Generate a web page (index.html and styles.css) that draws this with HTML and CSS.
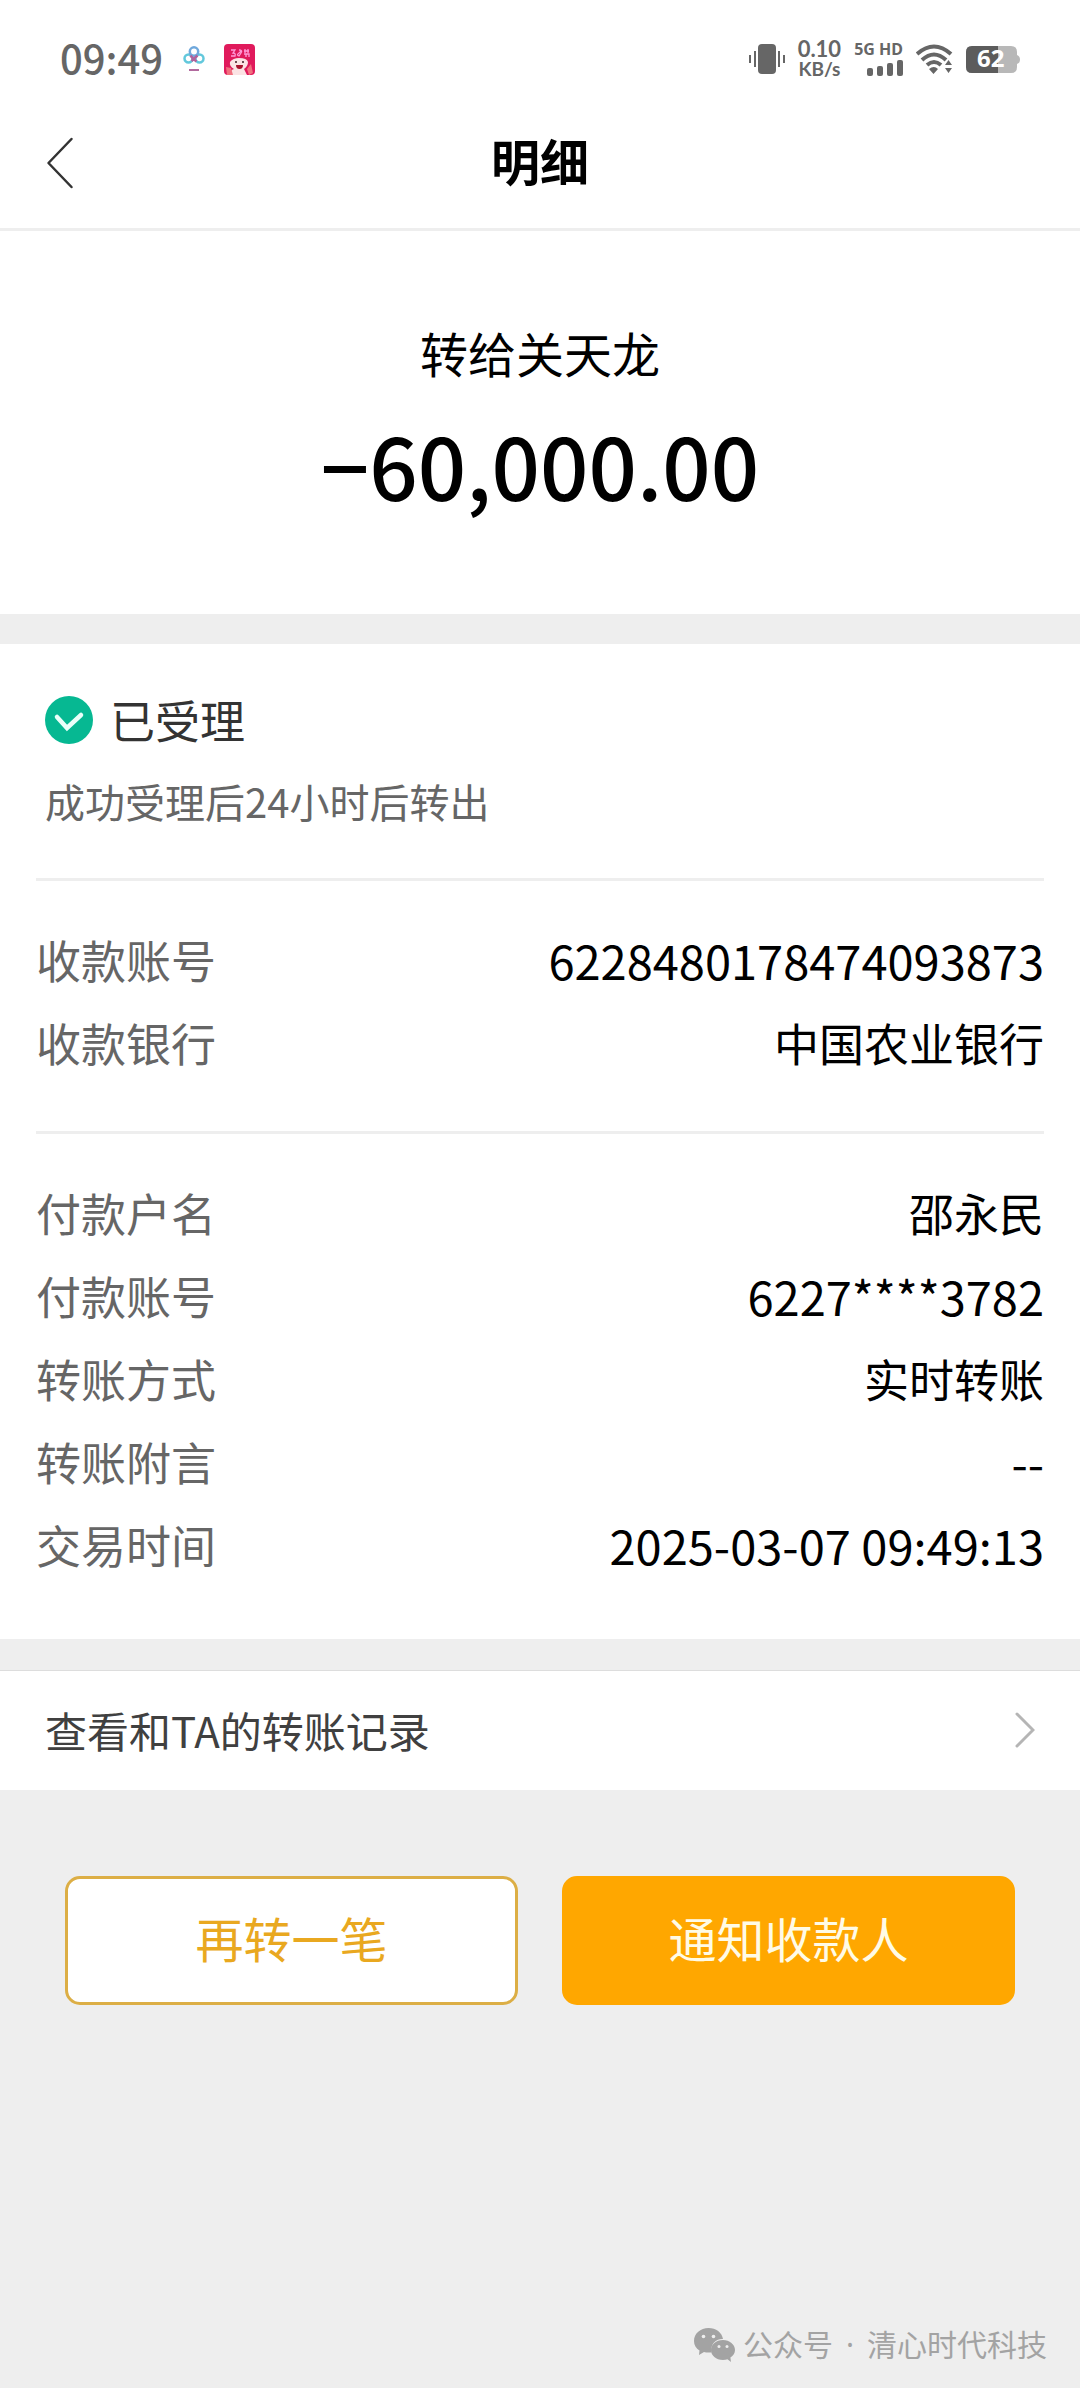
FILE: index.html
```html
<!DOCTYPE html>
<html lang="zh-CN">
<head>
<meta charset="utf-8">
<meta name="viewport" content="width=device-width, initial-scale=1">
<title>明细</title>
<link rel="stylesheet" href="styles.css">
</head>
<body>
<div class="page">
  <div class="status-bar">
    <div class="status-left">
      <span class="clock">09:49</span>
      <svg class="app-cloud" width="22" height="26" viewBox="0 0 22 26" fill="none" stroke-width="2.500">
        <circle cx="5.500" cy="12.500" r="4" stroke="#62c8dc"/>
        <circle cx="16.500" cy="12.500" r="4" stroke="#62c8dc"/>
        <circle cx="11" cy="5.500" r="4.200" stroke="#6fa8dc"/>
        <path d="M7.500 9.500Q9 12 13.500 15.500M14.500 9.500L8.500 15" stroke="#b0629c"/>
        <path d="M6 24h10" stroke="#b26a9e" stroke-width="2"/>
      </svg>
      <svg class="app-sale" width="31" height="31" viewBox="0 0 31 31">
        <rect width="31" height="31" rx="4" fill="#e01a5c"/>
        <path d="M7 6h4l-2 3q3 0 2 3h-4M15 6q4 0 2 3t-2 3q-3-1 0-3t0-3M20 7h5M21 5v4M24 5v4M20 10h5v3M22 10v3" fill="none" stroke="#ff9bd8" stroke-width="1.300"/>
        <path d="M6 31q0-5 4-6-5-3-4-7 3-4 9-4 8 0 9 4 0 4-4 7l3 6z" fill="#fbe3e4"/>
        <path d="M3 31l-1-8 5 1 2 7zM25 31l-2-6 4-5 2 9z" fill="#f0707e"/>
        <path d="M12 21h7q0 4-3.500 4t-3.500-4z" fill="#a8122c"/>
        <circle cx="12" cy="18" r="1" fill="#3b1b22"/>
        <circle cx="19" cy="18" r="1" fill="#3b1b22"/>
      </svg>
    </div>
    <div class="status-right">
      <svg width="36" height="30" viewBox="0 0 36 30" fill="#666">
        <rect x="9" width="18" height="30" rx="4"/>
        <path d="M5 7h2v16H5zM29 7h2v16h-2zM0 11h2v8H0zM34 11h2v8h-2z"/>
      </svg>
      <div class="speed"><span class="speed-value">0.10</span><span class="speed-unit">KB/s</span></div>
      <div class="network">
        <span class="network-type">5G HD</span>
        <svg width="36" height="16" viewBox="0 0 36 16" fill="#666">
          <rect y="8" width="6" height="8" rx="2"/><rect x="10" y="6" width="6" height="10" rx="2"/><rect x="20" y="3" width="6" height="13" rx="2"/><rect x="30" width="6" height="16" rx="2"/>
        </svg>
      </div>
      <svg width="37" height="30" viewBox="0 0 37 30">
        <path d="M1 10q17-15 34 0M6 16q12-11 24 0M11 21q7-6 14 0" fill="none" stroke="#666" stroke-width="4"/>
        <path d="M13 25q5-4 9 0l-4.500 5zM29 21l3.500-5 3.500 5zM29 24h7l-3.500 5z" fill="#666"/>
      </svg>
      <div class="battery">
        <svg width="54" height="27" viewBox="0 0 54 27">
          <path d="M6 0h39q6 0 6 6v3q3 1 3 4.500T51 18v3q0 6-6 6H6q-6 0-6-6V6q0-6 6-6z" fill="#b8b8b8"/>
          <path d="M6 0h26v27H6q-6 0-6-6V6q0-6 6-6z" fill="#5c5c5c"/>
        </svg>
        <span class="battery-level">62</span>
      </div>
    </div>
  </div>

  <header class="nav">
    <button class="back" type="button" aria-label="返回">
      <svg width="28" height="52" viewBox="0 0 28 52" fill="none" stroke="#333" stroke-width="2.500" stroke-linecap="round" stroke-linejoin="round"><path d="M25.500 2L2.500 26l23 24"/></svg>
    </button>
    <h1 class="title">明细</h1>
  </header>

  <main class="content">
    <section class="summary">
      <p class="payee">转给关天龙</p>
      <p class="amount">−60,000.00</p>
    </section>

    <section class="details">
      <div class="state">
        <div class="state-head">
          <svg width="48" height="48" viewBox="0 0 48 48"><circle cx="24" cy="24" r="24" fill="#06b892"/><path d="M12 21l10 11 14-13" fill="none" stroke="#e9fff9" stroke-width="4.500" stroke-linecap="round"/></svg>
          <h2 class="state-title">已受理</h2>
        </div>
        <p class="state-note">成功受理后24小时后转出</p>
      </div>
      <dl class="rows">
        <div class="row"><dt>收款账号</dt><dd class="num">6228480178474093873</dd></div>
        <div class="row"><dt>收款银行</dt><dd>中国农业银行</dd></div>
      </dl>
      <dl class="rows">
        <div class="row"><dt>付款户名</dt><dd>邵永民</dd></div>
        <div class="row"><dt>付款账号</dt><dd class="num">6227****3782</dd></div>
        <div class="row"><dt>转账方式</dt><dd>实时转账</dd></div>
        <div class="row"><dt>转账附言</dt><dd class="num">--</dd></div>
        <div class="row"><dt>交易时间</dt><dd class="num">2025-03-07 09:49:13</dd></div>
      </dl>
    </section>

    <a class="history" href="#history">
      <span>查看和TA的转账记录</span>
      <svg width="20" height="36" viewBox="0 0 20 36" fill="none" stroke="#b5b5b5" stroke-width="3" stroke-linecap="round"><path d="M2 2l16 16L2 34"/></svg>
    </a>

    <div class="actions">
      <button class="btn btn-outline" type="button">再转一笔</button>
      <button class="btn btn-solid" type="button">通知收款人</button>
    </div>
  </main>

  <footer class="credit">
    <svg width="41" height="34" viewBox="0 0 41 34">
      <path d="M14.500 0C6.500 0 0 5.500 0 13c0 4 2 7.500 5.500 9.500L5 27l5-3q2 .6 4.500.6h3A11 11 0 0 1 29 11C28 4.500 22 0 14.500 0z" fill="#a3a3a3"/>
      <path d="M29 12c-7 0-12 4.500-12 10s5 10 12 10q2.500 0 4.500-.7L37 34l-.6-4.500C39.300 27.700 41 25 41 22c0-5.500-5.500-10-12-10z" fill="#a3a3a3"/>
      <g fill="#eee"><circle cx="9.500" cy="8.500" r="1.800"/><circle cx="19.500" cy="8.500" r="1.800"/><circle cx="25" cy="18.500" r="1.500"/><circle cx="33" cy="18.500" r="1.500"/></g>
    </svg>
    <div class="credit-text"><span>公众号</span><span>·</span><span>清心时代科技</span></div>
  </footer>
</div>
</body>
</html>
```
FILE: styles.css
```css
* { box-sizing: border-box; }

body {
  margin: 0;
  background: #eee;
  color: #000;
  font-family: "Noto Sans CJK SC", sans-serif;
}

h1, h2, p, dl, dd { margin: 0; font-weight: 400; }
svg { display: block; flex: none; }
button { padding: 0; border: 0; background: none; color: inherit; font: inherit; cursor: pointer; }

.page { display: flex; flex-direction: column; min-height: 100vh; }

/* Phone status bar */
.status-bar {
  display: flex;
  justify-content: space-between;
  align-items: center;
  padding: 21px 60px 0;
  background: #fff;
  color: #666;
  font-weight: 500;
}
.status-left { display: flex; align-items: center; height: 76px; }
.clock { font-size: 40px; line-height: 72px; padding-bottom: 4px; }
.app-cloud { margin-left: 20px; }
.app-sale { margin-left: 19px; }
.status-right { display: flex; align-items: center; gap: 13px; }
.speed { display: flex; flex-direction: column; align-items: center; line-height: 20px; }
.speed-value { font-size: 22px; }
.speed-unit { font-size: 19px; }
.speed { font-family: Lato, sans-serif; font-weight: 700; }
.network-type, .battery-level { font-family: "Noto Sans", sans-serif; }
.network { display: flex; flex-direction: column; align-items: flex-end; gap: 3px; }
.network-type { font-size: 16px; font-weight: 700; line-height: 15px; }
.battery { display: grid; align-items: center; }
.battery > * { grid-area: 1 / 1; }
.battery-level { padding: 0 0 2px 11px; color: #fff; font-size: 24px; font-weight: 700; line-height: 24px; }

/* Title bar */
.nav {
  display: grid;
  grid-template-columns: 1fr auto 1fr;
  align-items: center;
  padding: 0 46px;
  border-bottom: 3px solid #eee;
  background: #fff;
}
.back { justify-self: start; }
.title { font-size: 49px; font-weight: 700; line-height: 125px; padding-bottom: 6px; }

.summary { padding: 89px 36px 94px; background: #fff; text-align: center; }
.payee { font-size: 48px; line-height: 64px; }
.amount { margin-top: 24px; font-size: 85px; font-weight: 500; line-height: 112px; }

.details { margin-top: 30px; padding: 44px 36px 16px; background: #fff; }
.state { padding: 0 9px 49px; }
.state-head { display: flex; align-items: center; gap: 17px; }
.state-title { color: #333; font-size: 45px; line-height: 64px; }
.state-note { margin-top: 21px; color: #666; font-size: 40px; line-height: 56px; }

.rows { padding: 37px 0; border-top: 3px solid #eee; }
.rows + .rows { margin-top: 10px; }
.row { display: flex; justify-content: space-between; font-size: 45px; line-height: 83px; }
.row dt { color: #666; }
.row .num { font-size: 47px; }

.history {
  display: flex;
  justify-content: space-between;
  align-items: center;
  margin-top: 31px;
  padding: 27px 45px 28px;
  border-top: 1px solid #ddd;
  background: #fff;
  color: #404040;
  font-size: 42px;
  line-height: 64px;
  text-decoration: none;
}

.actions { display: grid; grid-template-columns: 1fr 1fr; gap: 44px; padding: 86px 65px; }
.btn { padding: 28px 0 35px; border: 3px solid; border-radius: 15px; font-size: 48px; line-height: 60px; }
.btn-outline { border-color: #dcae45; background: #fff; color: #e9a820; }
.btn-solid { border-color: #ffa700; background: #ffa700; color: #fffbe6; }

.credit {
  display: flex;
  justify-content: flex-end;
  align-items: center;
  gap: 8px;
  margin-top: auto;
  padding: 0 33px 21px;
  color: #a3a3a3;
  font-family: "Noto Sans", "Noto Sans CJK SC", sans-serif;
  font-size: 30px;
  line-height: 44px;
}
.credit-text { display: flex; gap: 13px; }
```
